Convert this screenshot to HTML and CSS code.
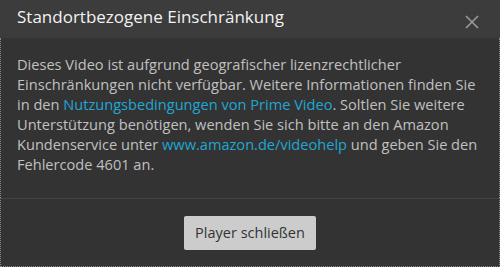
FILE: index.html
```html
<!DOCTYPE html>
<html lang="de">
<head>
    <meta charset="UTF-8">
    <meta name="viewport" content="width=device-width, initial-scale=1.0">
    <title>Standortbezogene Einschränkung</title>
    <link rel="stylesheet" href="styles.css">
</head>
<body>
    <div class="dialog">
        <div class="dialog-header">
            <h2>Standortbezogene Einschränkung</h2>
            <button class="close" aria-label="Schließen">
                <svg width="14" height="14" viewBox="0 0 14 14">
                    <path d="M1 1L13 13M13 1L1 13" stroke="#9a9a9a" stroke-width="1.6" fill="none"/>
                </svg>
            </button>
        </div>
        <div class="dialog-body">
            <p>Dieses Video ist aufgrund geografischer lizenzrechtlicher Einschränkungen nicht verfügbar. Weitere Informationen finden Sie in den <a href="#">Nutzungsbedingungen von Prime Video</a>. Soltlen Sie weitere Unterstützung benötigen, wenden Sie sich bitte an den Amazon Kundenservice unter <a href="#">www.amazon.de/videohelp</a> und geben Sie den Fehlercode 4601 an.</p>
        </div>
        <div class="dialog-footer">
            <button class="btn">Player schließen</button>
        </div>
    </div>
</body>
</html>
```

FILE: styles.css
```css
html, body { margin: 0; background-color: #333; }
body { font-family: "Open Sans", sans-serif; }
.dialog {
    width: 500px;
    height: 267px;
    background-color: #333;
    display: flex;
    flex-direction: column;
}
.dialog-header {
    height: 38px;
    box-sizing: border-box;
    flex-shrink: 0;
    background-color: #3c3c3c;
    display: flex;
    align-items: flex-start;
    justify-content: space-between;
    padding: 5px 21px 0 17px;
}
.dialog-header h2 {
    margin: 0;
    font-size: 17px;
    line-height: 24px;
    font-weight: normal;
    color: #f2f2f2;
}
.close {
    background: none;
    border: none;
    padding: 0;
    margin-top: 10px;
    display: flex;
}
.dialog-body {
    flex-grow: 1;
    padding: 16px 16px 0 16px;
    border-left: 1px dotted #8a8a8a;
    border-right: 1px dotted #8a8a8a;
}
.dialog-body p {
    margin: 0;
    font-size: 14.6px;
    line-height: 20px;
    color: #c0c0c0;
}
.dialog-body a {
    color: #1fa7d3;
    text-decoration: none;
}
.dialog-footer {
    height: 69px;
    flex-shrink: 0;
    box-sizing: border-box;
    display: flex;
    align-items: center;
    justify-content: center;
    border-top: 1px solid #444;
    border-left: 1px dotted #8a8a8a;
    border-right: 1px dotted #8a8a8a;
    border-bottom: 1px dotted #8a8a8a;
}
.btn {
    background-color: #cccccc;
    color: #333;
    border: none;
    border-radius: 2px;
    font-family: "Open Sans", sans-serif;
    font-size: 14.5px;
    width: 132px;
    height: 34px;
}
```
